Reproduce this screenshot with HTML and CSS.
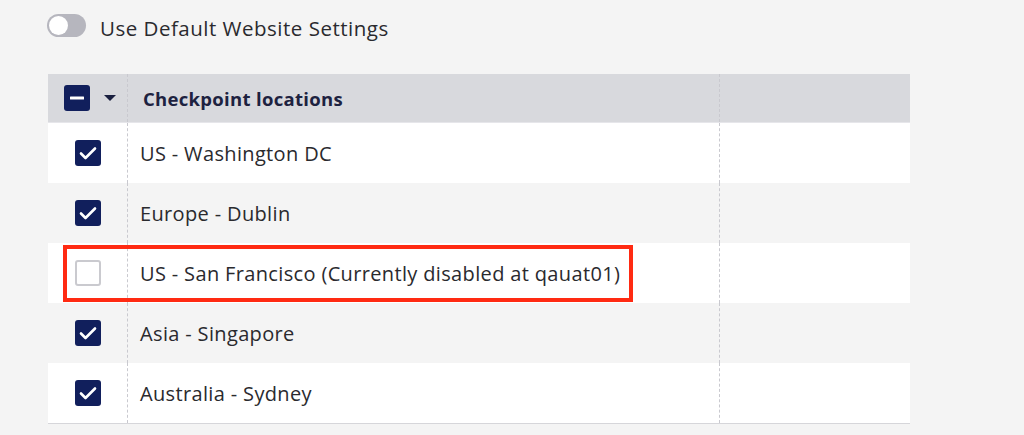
FILE: index.html
```html
<!DOCTYPE html>
<html lang="en">
<head>
<meta charset="utf-8">
<title>Checkpoint locations</title>
<link rel="stylesheet" href="styles.css">
</head>
<body>
<div class="page">
  <div class="toggle-row">
    <span class="toggle"><span class="knob"></span></span>
    <span class="toggle-label">Use Default Website Settings</span>
  </div>

  <div class="table">
    <div class="row head">
      <div class="cell c1">
        <span class="cb checked"><svg viewBox="0 0 26 26" width="26" height="26"><rect x="6" y="11.5" width="14" height="3" rx="0.5" fill="#fff"/></svg></span>
        <svg class="caret" viewBox="0 0 12 6" width="12" height="6"><path d="M0 0h12L6 6z" fill="#1b2040"/></svg>
      </div>
      <div class="cell c2">Checkpoint locations</div>
      <div class="cell c3"></div>
    </div>

    <div class="row">
      <div class="cell c1"><span class="cb checked"><svg viewBox="0 0 26 26" width="26" height="26"><path d="M6 13.5l4.5 4.5 9.5-9.5" fill="none" stroke="#fff" stroke-width="2.6" stroke-linecap="round" stroke-linejoin="round"/></svg></span></div>
      <div class="cell c2">US - Washington DC</div>
      <div class="cell c3"></div>
    </div>
    <div class="row alt">
      <div class="cell c1"><span class="cb checked"><svg viewBox="0 0 26 26" width="26" height="26"><path d="M6 13.5l4.5 4.5 9.5-9.5" fill="none" stroke="#fff" stroke-width="2.6" stroke-linecap="round" stroke-linejoin="round"/></svg></span></div>
      <div class="cell c2">Europe - Dublin</div>
      <div class="cell c3"></div>
    </div>
    <div class="row">
      <div class="cell c1"><span class="cb"></span></div>
      <div class="cell c2">US - San Francisco (Currently disabled at qauat01)</div>
      <div class="cell c3"></div>
    </div>
    <div class="row alt">
      <div class="cell c1"><span class="cb checked"><svg viewBox="0 0 26 26" width="26" height="26"><path d="M6 13.5l4.5 4.5 9.5-9.5" fill="none" stroke="#fff" stroke-width="2.6" stroke-linecap="round" stroke-linejoin="round"/></svg></span></div>
      <div class="cell c2">Asia - Singapore</div>
      <div class="cell c3"></div>
    </div>
    <div class="row">
      <div class="cell c1"><span class="cb checked"><svg viewBox="0 0 26 26" width="26" height="26"><path d="M6 13.5l4.5 4.5 9.5-9.5" fill="none" stroke="#fff" stroke-width="2.6" stroke-linecap="round" stroke-linejoin="round"/></svg></span></div>
      <div class="cell c2">Australia - Sydney</div>
      <div class="cell c3"></div>
    </div>

    <div class="highlight"></div>
  </div>
</div>
</body>
</html>
```

FILE: styles.css
```css
html, body {
  margin: 0;
  padding: 0;
  background: #f4f4f4;
}

body {
  font-family: "Open Sans", Lato, "Liberation Sans", sans-serif;
  color: #2a2a2e;
}

.page {
  padding: 14px 0 0 47px;
  width: 863px;
}

.toggle-row {
  display: flex;
  align-items: center;
  gap: 14px;
  height: 23px;
}

.toggle {
  width: 39px;
  height: 23px;
  border-radius: 12px;
  background: #b6b6be;
  display: flex;
  align-items: center;
  padding-left: 2px;
  box-sizing: border-box;
}

.knob {
  width: 19px;
  height: 19px;
  border-radius: 50%;
  background: #ffffff;
}

.toggle-label {
  font-size: 20.5px;
  letter-spacing: 0.5px;
  color: #2a2a2e;
  line-height: 23px;
  position: relative;
  top: 3px;
}

.table {
  position: relative;
  margin-top: 37px;
  width: 862px;
  margin-left: 1px;
  border-bottom: 1px solid #d6d6da;
}

.row {
  display: flex;
  height: 60px;
  background: #ffffff;
}

.row.alt {
  background: #f4f4f4;
}

.row.head {
  height: 48px;
  background: #d8d9dd;
  border-bottom: 1px solid #e6e6ea;
}

.cell {
  display: flex;
  align-items: center;
  box-sizing: border-box;
}

.c1 {
  width: 80px;
  justify-content: center;
  border-right: 1px dashed #c9c9cf;
}

.head .c1 {
  justify-content: flex-start;
  padding-left: 16px;
  gap: 14px;
}

.c2 {
  width: 592px;
  padding-left: 12px;
  font-size: 20px;
  letter-spacing: 0.35px;
  color: #2a2a2e;
  border-right: 1px dashed #c9c9cf;
}

.head .c2 {
  padding-left: 15px;
  font-weight: 700;
  font-size: 18.5px;
  letter-spacing: 0.3px;
  color: #1d2240;
}

.c3 {
  flex: 1;
}

.cb {
  width: 26px;
  height: 26px;
  box-sizing: border-box;
  border-radius: 3px;
  border: 2px solid #cacacf;
  background: #ffffff;
  display: block;
}

.cb.checked {
  border: none;
  background: #111f5c;
}

.cb svg {
  display: block;
}

.caret {
  display: block;
}

.highlight {
  position: absolute;
  left: 15px;
  top: 171px;
  width: 570px;
  height: 57px;
  box-sizing: border-box;
  border: 4px solid #ff2a12;
  pointer-events: none;
}
```
